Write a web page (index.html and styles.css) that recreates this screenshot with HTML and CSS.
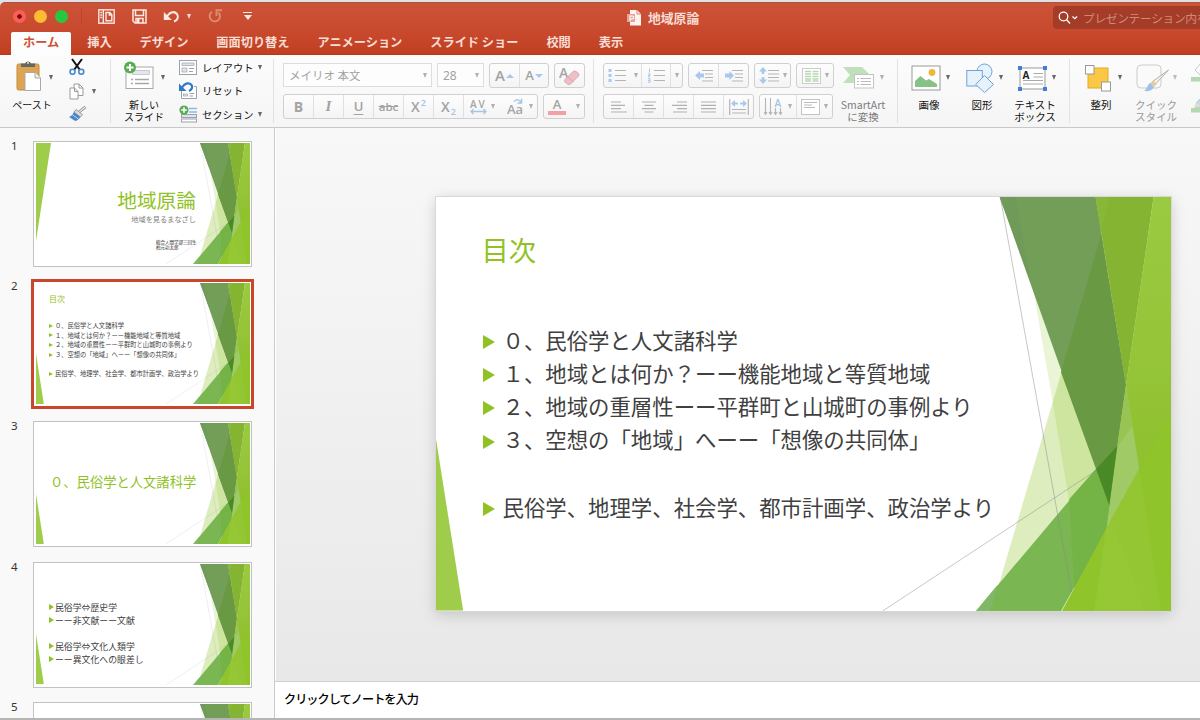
FILE: index.html
```html
<!DOCTYPE html>
<html lang="ja">
<head>
    <meta charset="UTF-8">
    <meta name="viewport" content="width=device-width, initial-scale=1.0">
    <title>地域原論</title>
    <link rel="stylesheet" href="styles.css">
</head>
<body>
    <!-- Shared slide artwork -->
    <svg class="defs" width="0" height="0">
        <symbol id="facet" viewBox="-1275 35 2205 1241" preserveAspectRatio="none">
            <polygon points="720,160 390,1276 930,1276 930,160" fill="#90c226" fill-opacity=".3"/>
            <polygon points="465,35 520,330 570,620 620,920 665,1276 930,1276 930,35" fill="#90c226" fill-opacity=".19"/>
            <polygon points="416,35 704,35 795,600 745,960" fill="#739e58"/>
            <polygon points="416,35 465,35 510,290" fill="#6f9a5a"/>
            <polygon points="720,150 795,600 745,960 600,560" fill="#6a9943"/>
            <polygon points="704,35 878,35 795,600" fill="#84b431"/>
            <polygon points="704,35 745,35 720,145" fill="#88b739"/>
            <polygon points="878,35 930,35 930,1276 700,1276 795,600" fill="url(#side)"/>
            <polygon points="795,600 835,850 745,1020 735,1030 769,780" fill="#a0ca66"/>
            <polygon points="795,600 813,722 769,785" fill="#97c452"/>
            <polygon points="345,1276 705,850 769,780 735,1035 600,1276" fill="#7ab651"/>
            <polygon points="345,1276 410,1197 388,1276" fill="#80b866"/>
            <polygon points="625,940 705,850 745,960 735,1035 640,1210" fill="#74b346"/>
            <polygon points="705,850 769,780 745,960" fill="#4a8a26"/>
            <path class="hairline" d="M418 35L632 1220M65 1276L705 855"/>
            <polygon points="603,1276 735,1030 835,850 930,690 930,1276" fill="#8fc42a"/>
            <polygon points="735,1030 752,1000 855,1276 700,1276" fill="#96c836"/>
            <polygon points="752,1000 835,850 900,1276 855,1276" fill="#93c632"/>
        </symbol>
        <linearGradient id="side" x1="0" y1="0" x2="0" y2="1">
            <stop offset="0" stop-color="#9aca40"/>
            <stop offset=".35" stop-color="#96c53a"/>
            <stop offset=".6" stop-color="#90c130"/>
        </linearGradient>
        <symbol id="wedge" viewBox="0 0 27 172" preserveAspectRatio="none">
            <polygon points="0,0 27,172 0,172" fill="#a0cc4b"/>
        </symbol>
    </svg>

    <div class="window">
        <header class="titlebar">
            <div class="quickbar">
                <span class="light red"></span>
                <span class="light yellow"></span>
                <span class="light green"></span>
                <span class="quick-sep"></span>
                <svg class="q-layout" width="17" height="15" viewBox="0 0 17 15" fill="none" stroke="#fbe9e4" stroke-width="1.4">
                    <rect x=".8" y=".8" width="15.4" height="13.4"/>
                    <path d="M5.3 1v13M2.3 3.5H4M2.3 6H4M2.3 8.5H4M8 3.5h3.8l2 2v6.3H8zM11.3 3.5V6h2.5"/>
                </svg>
                <svg class="q-save" width="15" height="15" viewBox="0 0 15 15" fill="none" stroke="#fbe9e4" stroke-width="1.5">
                    <path d="M1 1h13v13H3L1 12zM3.5 1v5.5h8V1M4 14v-4.500h7V14"/>
                    <path d="M5 10h2.500v4H5z" fill="#fbe9e4" stroke="none"/>
                </svg>
                <svg class="q-undo" width="17" height="13" viewBox="0 0 17 13" fill="none" stroke="#fbe9e4" stroke-width="2">
                    <path d="M3 8C6 2 11 .5 14 4c2 3 .5 6.500-3 7.500"/>
                    <path d="M.8 2v8h8z" fill="#fbe9e4" stroke="none"/>
                </svg>
                <i class="caret light-caret"></i>
                <svg class="q-redo" width="14" height="14" viewBox="0 0 14 14" fill="none" stroke="#dd8a76" stroke-width="1.900">
                    <path d="M4 2.800A5.200 5.200 0 1 0 10.500 3.500"/>
                    <path d="M8.500 7V1.200H14"/>
                </svg>
                <span class="q-more"><i class="caret"></i></span>
            </div>
            <div class="doc-title">
                <svg width="15" height="16" viewBox="0 0 15 16">
                    <path d="M3 0h7l4 4v11.500H3z" fill="#fdf3f0"/>
                    <path d="M10 0v4h4" fill="none" stroke="#d9836f"/>
                    <rect y="4" width="8" height="8" fill="#e8a493"/>
                    <path d="M3 11V6h2.200a1.500 1.500 0 0 1 0 3H3" fill="none" stroke="#fff" stroke-width="1.100"/>
                </svg>
                <span>地域原論</span>
            </div>
            <div class="search">
                <svg width="21" height="14" viewBox="0 0 21 14" fill="none" stroke="#fff" stroke-width="1.300">
                    <circle cx="5.500" cy="5.500" r="4.300"/>
                    <path d="M8.600 8.800L12 12.500M14.500 5.500l2.300 2.200 2.300-2.200"/>
                </svg>
                <span>プレゼンテーション内を検索</span>
            </div>
        </header>

        <nav class="tabs">
            <a class="tab active">ホーム</a>
            <a class="tab">挿入</a>
            <a class="tab">デザイン</a>
            <a class="tab">画面切り替え</a>
            <a class="tab">アニメーション</a>
            <a class="tab">スライド ショー</a>
            <a class="tab">校閲</a>
            <a class="tab">表示</a>
        </nav>

        <div class="ribbon">
            <!-- Clipboard -->
            <div class="group g-clip">
                <div class="big-btn">
                    <svg width="30" height="32" viewBox="0 0 30 32">
                        <rect x="1" y="4" width="22" height="26" rx="1.500" fill="#dda452" stroke="#c58b3e"/>
                        <path d="M5 7V3.500h4a3.200 3.200 0 0 1 6 0h4V7z" fill="#666"/>
                        <circle cx="12" cy="3" r="1" fill="#ddd"/>
                        <path d="M9 12.500h10l5.500 5.500v12.500H9z" fill="#fff" stroke="#a9a9a9"/>
                        <path d="M19 12.500V18h5.500" fill="#eee" stroke="#a9a9a9"/>
                    </svg>
                    <i class="caret"></i>
                    <span class="label">ペースト</span>
                </div>
                <div class="small-col">
                    <svg width="16" height="18" viewBox="0 0 16 18" fill="none">
                        <path d="M3 1l8 11M13 1L5 12" stroke="#111" stroke-width="2"/>
                        <circle cx="3.500" cy="13.800" r="2.500" stroke="#3f86d0" stroke-width="1.500"/>
                        <circle cx="12.300" cy="13.800" r="2.500" stroke="#3f86d0" stroke-width="1.500"/>
                    </svg>
                    <div class="inline">
                        <svg width="15" height="17" viewBox="0 0 15 17" fill="#fff" stroke="#9a9a9a">
                            <path d="M5 1h5l4 4v7.500H5zM10 1v4h4"/>
                            <path d="M1 5h4.500l3.500 3.500v7.500H1z"/>
                            <path d="M5.500 5v3.500H9" fill="none"/>
                        </svg>
                        <i class="caret"></i>
                    </div>
                    <svg width="18" height="16" viewBox="0 0 18 16">
                        <path d="M16.500.8L10 6" stroke="#888" stroke-width="2.800"/>
                        <path d="M16.500.8L10 6" stroke="#eee" stroke-width="1.200"/>
                        <path d="M7 3.500l6.500 5-2 2.500L5 6z" fill="#ddd" stroke="#888" stroke-width=".8"/>
                        <path d="M4.800 6l6.500 5c-1 2-3 3.500-5 4L0 11c2-.5 4-2.500 4.800-5z" fill="#4c86c6"/>
                        <path d="M3 8.500l6.500 4.500" stroke="#bcd6ef"/>
                    </svg>
                </div>
            </div>

            <!-- Slides -->
            <div class="group g-slides">
                <div class="big-btn">
                    <svg width="32" height="30" viewBox="0 0 32 30">
                        <rect x="3" y="6" width="27" height="21.500" fill="#fff" stroke="#a8a8a8"/>
                        <rect x="9.500" y="9.500" width="17" height="4" fill="#e3e6ec" stroke="#b5b9c0" stroke-width=".7"/>
                        <path d="M8 18.500h2m2 0h14M8 22.500h2m2 0h14" stroke="#a8a8a8" stroke-width="1.300"/>
                        <circle cx="7" cy="6.500" r="6" fill="#58ad53"/>
                        <path d="M7 3v7M3.500 6.500h7" stroke="#fff" stroke-width="2"/>
                    </svg>
                    <i class="caret"></i>
                    <span class="label">新しい<br>スライド</span>
                </div>
                <div class="small-col slide-cmds">
                    <div class="inline">
                        <svg width="18" height="15" viewBox="0 0 18 15" fill="#fff" stroke="#9da1a8">
                            <rect x=".5" y=".5" width="17" height="14"/>
                            <rect x="3" y="3" width="12" height="2.500" fill="#dfe3ec" stroke-width=".7"/>
                            <rect x="3" y="8" width="5" height="4" fill="#dfe3ec" stroke-width=".7"/>
                            <path d="M10 8.500h5M10 11.500h4"/>
                        </svg>
                        <span>レイアウト</span><i class="caret"></i>
                    </div>
                    <div class="inline">
                        <svg width="18" height="17" viewBox="0 0 18 17" fill="#fff" stroke="#9da1a8">
                            <path d="M2.500 9v7.500h15v-12H15"/>
                            <rect x="4.500" y="12" width="4" height="2" fill="#dfe3ec" stroke-width=".7"/>
                            <path d="M10.500 11.500H15M10.500 14H14"/>
                            <path d="M3 5.500C6 1 10 0 12.500 3c1.500 2.500 0 5-2.500 6" fill="none" stroke="#2f79c8" stroke-width="2.200"/>
                            <path d="M0 1.500V9h7.500z" fill="#2f79c8" stroke="none"/>
                        </svg>
                        <span>リセット</span>
                    </div>
                    <div class="inline">
                        <svg width="18" height="18" viewBox="0 0 18 18" fill="#dfe3ec" stroke="#9da1a8">
                            <path d="M10 3.500h8M10 7h8" stroke="#8fb8e6" stroke-width="1.400"/>
                            <rect x="2.500" y="9.500" width="15" height="3"/>
                            <rect x="2.500" y="14" width="15" height="3" fill="#fff"/>
                            <circle cx="5" cy="5" r="4.600" fill="#58ad53" stroke="none"/>
                            <path d="M5 2.200v5.600M2.200 5h5.600" stroke="#fff" stroke-width="1.600"/>
                        </svg>
                        <span>セクション</span><i class="caret"></i>
                    </div>
                </div>
            </div>

            <!-- Font -->
            <div class="group g-font dim">
                <div class="row">
                    <div class="combo combo-font">メイリオ 本文<i class="caret"></i></div>
                    <div class="combo combo-size">28<i class="caret"></i></div>
                    <div class="btns">
                        <b class="cell w30"><span class="glyph">A</span><i class="tri up"></i></b>
                        <b class="cell w28"><span class="glyph sm">A</span><i class="tri down"></i></b>
                    </div>
                    <div class="btns">
                        <b class="cell w29">
                            <svg width="22" height="21" viewBox="0 0 22 21">
                                <text x="0" y="13" class="svg-a">A</text>
                                <path d="M6 14.500L14 6.500q1.500-1 3 0l2.500 2q1 1.500 0 2.500l-8 8q-1.500 1-3 0L6 17q-1-1.500 0-2.500z" fill="#f0bfc6" stroke="#dba6ae"/>
                                <path d="M9 12l5.500 5" stroke="#dba6ae"/>
                            </svg>
                        </b>
                    </div>
                </div>
                <div class="row">
                    <div class="btns">
                        <b class="cell w30 strong">B</b>
                        <b class="cell w30 ital">I</b>
                        <b class="cell w30 under">U</b>
                        <b class="cell w30 strike">abc</b>
                        <b class="cell w30 sup">X<sup>2</sup></b>
                        <b class="cell w30 sup">X<sub>2</sub></b>
                        <b class="cell w38 plain">
                            <svg width="17" height="16" viewBox="0 0 17 16">
                                <text x="0" y="8.500" class="svg-av">AV</text>
                                <path d="M1 12.500h15M3.500 10L1 12.500 3.500 15M13.500 10l2.500 2.500-2.500 2.500" fill="none" stroke="#a5c4e8" stroke-width="1.300"/>
                            </svg><i class="caret"></i>
                        </b>
                        <b class="cell w35">
                            <svg width="18" height="18" viewBox="0 0 18 18">
                                <text x="0" y="15.500" class="svg-aa">Aa</text>
                                <path d="M7 3.500Q11 0 14 4M14.500.8V5h-4" fill="none" stroke="#a5c4e8" stroke-width="1.500"/>
                            </svg><i class="caret"></i>
                        </b>
                    </div>
                    <div class="btns">
                        <b class="cell w27 plain"><span class="fontcolor">A</span></b>
                        <b class="cell w13"><i class="caret"></i></b>
                    </div>
                </div>
            </div>

            <!-- Paragraph -->
            <div class="group g-para dim">
                <div class="rows">
                    <div class="row">
                        <div class="btns">
                            <b class="cell w27 plain">
                                <svg width="18" height="15" viewBox="0 0 18 15">
                                    <path d="M7 2.500h11M7 7.500h11M7 12.500h11" stroke="#b5b5b5" stroke-width="1.200"/>
                                    <path d="M.5 2.500h3M.5 7.500h3M.5 12.500h3" stroke="#a9c8ee" stroke-width="3"/>
                                </svg>
                            </b>
                            <b class="cell w11"><i class="caret"></i></b>
                            <b class="cell w29">
                                <svg width="18" height="15" viewBox="0 0 18 15">
                                    <path d="M7 2.500h11M7 7.500h11M7 12.500h11" stroke="#b5b5b5" stroke-width="1.200"/>
                                    <path d="M2.500.5v4M1 6h2v1.500H1.500V9H3M1 10.700h2v3.600H1M1 12.500h2" fill="none" stroke="#a9c8ee"/>
                                </svg>
                            </b>
                            <b class="cell w11"><i class="caret"></i></b>
                        </div>
                        <div class="btns">
                            <b class="cell w30">
                                <svg width="18" height="13" viewBox="0 0 18 13">
                                    <path d="M7 1.500h11M10 5h8M10 8.500h8M7 12h11" stroke="#b5b5b5" stroke-width="1.200"/>
                                    <path d="M0 6.500L5 2v2.500h4v4H5V11z" fill="#a9c8ee"/>
                                </svg>
                            </b>
                            <b class="cell w29">
                                <svg width="18" height="13" viewBox="0 0 18 13">
                                    <path d="M7 1.500h11M10 5h8M10 8.500h8M7 12h11" stroke="#b5b5b5" stroke-width="1.200"/>
                                    <path d="M9 6.500L4.500 2v2.500H0v4h4.500V11z" fill="#a9c8ee"/>
                                </svg>
                            </b>
                        </div>
                        <div class="btns">
                            <b class="cell w35">
                                <svg width="20" height="17" viewBox="0 0 20 17">
                                    <path d="M9 3.500h11M9 7h11M9 10.500h11M9 14h11" stroke="#b5b5b5" stroke-width="1.200"/>
                                    <path d="M4 0l4 4.500H5.300V7H2.700V4.500H0zM4 17l4-4.500H5.300V10H2.700v2.500H0z" fill="#a9c8ee"/>
                                </svg><i class="caret"></i>
                            </b>
                        </div>
                        <div class="btns">
                            <b class="cell w36">
                                <svg width="19" height="16" viewBox="0 0 19 16">
                                    <rect x=".5" y=".5" width="18" height="15" fill="#fff" stroke="#ccc"/>
                                    <path d="M3 3.500h6M3 6h6M3 8.500h6M3 11h6M3 13h6M10.500 3.500h6M10.500 6h6M10.500 8.500h6M10.500 11h6M10.500 13h6" stroke="#b5dab1" stroke-width="1.600"/>
                                </svg><i class="caret"></i>
                            </b>
                        </div>
                    </div>
                    <div class="row">
                        <div class="btns">
                            <b class="cell w30"><svg width="16" height="12" viewBox="0 0 16 12" stroke="#b0b0b0" stroke-width="1.200"><path d="M0 1h10M0 4.300h14M0 7.600h10M0 11h16"/></svg></b>
                            <b class="cell w30"><svg width="16" height="12" viewBox="0 0 16 12" stroke="#b0b0b0" stroke-width="1.200"><path d="M1 1h14M3.500 4.300h9M1 7.600h14M3.500 11h9"/></svg></b>
                            <b class="cell w30"><svg width="16" height="12" viewBox="0 0 16 12" stroke="#b0b0b0" stroke-width="1.200"><path d="M6 1h10M1 4.300h15M6 7.600h10M2 11h14"/></svg></b>
                            <b class="cell w30"><svg width="16" height="12" viewBox="0 0 16 12" stroke="#b0b0b0" stroke-width="1.200"><path d="M0 1h15M0 4.300h15M0 7.600h15M0 11h15"/></svg></b>
                            <b class="cell w29">
                                <svg width="20" height="16" viewBox="0 0 20 16">
                                    <path d="M.7 0v16M19.300 0v16M3 10.500h14M3 14h14" stroke="#b5b5b5" stroke-width="1.200"/>
                                    <path d="M2 4.500L6 1v2.500h3v2H6V8zM18 4.500L14 1v2.500h-3v2h3V8z" fill="#a9c8ee"/>
                                </svg>
                            </b>
                        </div>
                        <div class="btns">
                            <b class="cell w37">
                                <svg width="20" height="17" viewBox="0 0 20 17">
                                    <path d="M1.500 0v16M6.500 0v16M11.500 10v6M16.500 10v6M0 14l1.500 2.500L3 14M5 14l1.500 2.500L8 14M10 14l1.500 2.500L13 14M15 14l1.500 2.500L18 14" fill="none" stroke="#b5b5b5" stroke-width="1.100"/>
                                    <text x="10.500" y="8.500" class="svg-blue">A</text>
                                </svg><i class="caret"></i>
                            </b>
                            <b class="cell w35">
                                <svg width="19" height="16" viewBox="0 0 19 16">
                                    <rect x=".5" y=".5" width="18" height="15" fill="#fff" stroke="#c4c4c4"/>
                                    <path d="M3 3.500h13M3 6h8M3 8.500h11" stroke="#bbb"/>
                                </svg><i class="caret"></i>
                            </b>
                        </div>
                    </div>
                </div>
                <div class="big-btn smartart">
                    <svg width="32" height="28" viewBox="0 0 32 28">
                        <path d="M0 3h19l8 8-8 8H0l7-8z" fill="#bfe0bb"/>
                        <rect x="11.500" y="10.500" width="19" height="13.500" fill="#fff" stroke="#c4c4c4"/>
                        <path d="M14 14.500h2m1.500 0H28M14 17.500h2m1.500 0H28M14 20.500h2m1.500 0H28" stroke="#bbb"/>
                    </svg>
                    <i class="caret"></i>
                    <span class="label">SmartArt<br>に変換</span>
                </div>
            </div>

            <!-- Insert -->
            <div class="group g-insert">
                <div class="big-btn">
                    <svg class="nudge" width="32" height="28" viewBox="0 0 32 28">
                        <rect x="1" y="2" width="28" height="24" fill="#fff" stroke="#999"/>
                        <path d="M4 23v-6l5.500-5 5.500 4.500 3-1.500 8 5V23z" fill="#86c283"/>
                        <circle cx="21" cy="8.500" r="3.400" fill="#eeb53f"/>
                    </svg>
                    <i class="caret"></i>
                    <span class="label">画像</span>
                </div>
                <div class="big-btn">
                    <svg width="32" height="30" viewBox="0 0 32 30" fill="#e6f2fc" stroke="#6ea3d8">
                        <circle cx="18.500" cy="8.500" r="7.500"/>
                        <rect x=".8" y="7.500" width="15.500" height="15.500"/>
                        <path d="M18.500 12.500l9 9-9 8-8.800-8z"/>
                    </svg>
                    <i class="caret"></i>
                    <span class="label">図形</span>
                </div>
                <div class="big-btn">
                    <svg class="nudge" width="32" height="28" viewBox="0 0 32 28">
                        <rect x="3" y="4" width="25" height="21" fill="#fff" stroke="#999"/>
                        <path d="M16.500 9.500H26M16.500 13H26M6 16.500h20M6 20h20" stroke="#aaa"/>
                        <text x="5.500" y="14.500" class="svg-box">A</text>
                        <path d="M1 4h4M26 4h4M1 25h4M26 25h4" stroke="#3f7fd6" stroke-width="4"/>
                    </svg>
                    <i class="caret"></i>
                    <span class="label">テキスト<br>ボックス</span>
                </div>
            </div>

            <!-- Arrange -->
            <div class="group g-arrange">
                <div class="big-btn">
                    <svg class="nudge" width="32" height="28" viewBox="0 0 32 28">
                        <rect x="5" y="4" width="20" height="20" fill="#fac845" stroke="#e0ab2a"/>
                        <rect x="2.500" y="1.500" width="8.500" height="8.500" fill="#fff" stroke="#999"/>
                        <rect x="18.500" y="18" width="9" height="9" fill="#fff" stroke="#999"/>
                    </svg>
                    <i class="caret"></i>
                    <span class="label">整列</span>
                </div>
                <div class="big-btn faded">
                    <svg class="nudge" width="36" height="29" viewBox="0 0 36 29">
                        <rect x="1" y="2" width="24" height="23" rx="4" fill="#fafafa" stroke="#ccc"/>
                        <path d="M32.500 7L19 21.500l-3-2.500z" fill="#f4f0ec" stroke="#b5b0a8"/>
                        <path d="M17 17.500l4 3.500-3 3-4-3.500z" fill="#e8c9a0"/>
                        <path d="M14 20l4 4c-2 4-6 4.500-10 4 3-1.500 3-6 6-8z" fill="#9dc2e8"/>
                    </svg>
                    <i class="caret"></i>
                    <span class="label">クイック<br>スタイル</span>
                </div>
                <div class="clipped">
                    <svg width="20" height="20" viewBox="0 0 20 20">
                        <path d="M4 8l6-7 8 7-7 7z" fill="#fafafa" stroke="#c0c4cc"/>
                        <rect x="0" y="15" width="20" height="4.500" fill="#add6aa"/>
                    </svg>
                    <svg width="20" height="20" viewBox="0 0 20 20">
                        <path d="M4 14l2-6 8-8 4 4-9 9z" fill="#bcd6f2" stroke="#a8c2de"/>
                        <path d="M4 14l2-5 3 3z" fill="#f3ddb0"/>
                        <rect x="0" y="14" width="20" height="4.500" fill="#add6aa"/>
                    </svg>
                </div>
            </div>
        </div>

        <div class="workspace">
            <aside class="sidebar">
                <div class="thumb-row">
                    <span class="num">1</span>
                    <div class="thumb">
                        <div class="slide t-title">
                            <svg class="art"><use href="#facet"/></svg>
                            <svg class="wedge-top" viewBox="0 0 15 98"><polygon points="0,0 15,0 0,98" fill="#a0cc4b"/></svg>
                            <h3>地域原論</h3>
                            <p class="sub">地域を見るまなざし</p>
                            <p class="by">総合人間学部三回生<br>柏元功太郎</p>
                        </div>
                    </div>
                </div>
                <div class="thumb-row">
                    <span class="num">2</span>
                    <div class="thumb selected">
                        <div class="slide t-toc">
                            <svg class="art"><use href="#facet"/></svg>
                            <svg class="wedge"><use href="#wedge"/></svg>
                            <h3>目次</h3>
                            <ul>
                                <li>０、民俗学と人文諸科学</li>
                                <li>１、地域とは何か？ーー機能地域と等質地域</li>
                                <li>２、地域の重層性ーー平群町と山城町の事例より</li>
                                <li>３、空想の「地域」へーー「想像の共同体」</li>
                                <li class="gap">民俗学、地理学、社会学、都市計画学、政治学より</li>
                            </ul>
                        </div>
                    </div>
                </div>
                <div class="thumb-row">
                    <span class="num">3</span>
                    <div class="thumb">
                        <div class="slide t-section">
                            <svg class="art"><use href="#facet"/></svg>
                            <svg class="wedge"><use href="#wedge"/></svg>
                            <h3>０、民俗学と人文諸科学</h3>
                        </div>
                    </div>
                </div>
                <div class="thumb-row">
                    <span class="num">4</span>
                    <div class="thumb">
                        <div class="slide t-body">
                            <svg class="art"><use href="#facet"/></svg>
                            <svg class="wedge"><use href="#wedge"/></svg>
                            <ul>
                                <li>民俗学⇔歴史学</li>
                                <li>ーー非文献ーー文献</li>
                                <li class="gap">民俗学⇔文化人類学</li>
                                <li>ーー異文化への眼差し</li>
                            </ul>
                        </div>
                    </div>
                </div>
                <div class="thumb-row">
                    <span class="num">5</span>
                    <div class="thumb">
                        <div class="slide">
                            <svg class="art"><use href="#facet"/></svg>
                        </div>
                    </div>
                </div>
            </aside>

            <main class="editor">
                <div class="canvas">
                    <div class="slide main-slide">
                        <svg class="art"><use href="#facet"/></svg>
                        <svg class="wedge"><use href="#wedge"/></svg>
                        <h1>目次</h1>
                        <ul>
                            <li>０、民俗学と人文諸科学</li>
                            <li>１、地域とは何か？ーー機能地域と等質地域</li>
                            <li>２、地域の重層性ーー平群町と山城町の事例より</li>
                            <li>３、空想の「地域」へーー「想像の共同体」</li>
                            <li class="gap">民俗学、地理学、社会学、都市計画学、政治学より</li>
                        </ul>
                    </div>
                </div>
                <div class="notes">クリックしてノートを入力</div>
            </main>
        </div>
    </div>
</body>
</html>
```

FILE: styles.css
```css
* {
    box-sizing: border-box;
}

body {
    margin: 0;
    font-family: "Noto Sans CJK JP", sans-serif;
    color: #222;
    background: #e1e0e4;
    overflow: hidden;
}

h1, h3, p, ul {
    margin: 0;
    padding: 0;
    font-weight: 400;
}

ul {
    list-style: none;
}

svg {
    display: block;
    flex: none;
}

.defs {
    position: absolute;
}

.window {
    display: flex;
    flex-direction: column;
    width: 1200px;
    height: 720px;
    padding-top: 2px;
    border-bottom: 2px solid #b5b5b5;
}

/* Title bar */
.titlebar {
    display: flex;
    align-items: center;
    height: 30px;
    background: linear-gradient(#cc5338, #c8492d);
    border-top: 1px solid #a9523f;
    border-radius: 5px 0 0 0;
}

.quickbar {
    display: flex;
    flex: none;
    align-items: center;
    width: 600px;
    padding-left: 13px;
    padding-bottom: 3px;
}

.light {
    width: 13px;
    height: 13px;
    margin-right: 8px;
    border-radius: 50%;
}

.red {
    background: radial-gradient(circle, #7c0d0b 0 2px, #fb5e5a 2.5px);
}

.yellow {
    background: #fdbb32;
}

.green {
    background: #27c83f;
}

.quick-sep {
    width: 1px;
    height: 16px;
    margin-left: 5px;
    background: #bd452c;
}

.q-layout {
    margin-left: 16px;
}

.q-save {
    margin-left: 17px;
}

.q-undo {
    margin-left: 16px;
}

.caret {
    display: block;
    flex: none;
    width: 0;
    height: 0;
    border: 2.5px solid transparent;
    border-top: 5px solid #666;
    border-bottom: 0;
}

.light-caret {
    margin-left: 7px;
    border-top-color: #f6dcd5;
}

.q-redo {
    margin-left: 17px;
}

.q-more {
    display: flex;
    flex-direction: column;
    align-items: center;
    width: 9px;
    margin-left: 21px;
    padding-top: 2px;
    border-top: 1px solid #fbe9e4;
}

.q-more .caret {
    border-width: 5px 4px 0;
    border-top-color: #fbe9e4;
}

.doc-title {
    display: flex;
    flex: none;
    align-items: center;
    gap: 6px;
    width: 453px;
    padding-left: 27px;
    font-size: 12.8px;
    font-weight: 700;
    line-height: 20px;
    color: #f8ddd5;
}

.search {
    display: flex;
    flex: none;
    align-items: center;
    gap: 4px;
    width: 147px;
    height: 23px;
    padding-left: 5px;
    border-radius: 4px 0 0 4px;
    background: #a43c27;
    color: #d0897a;
    font-size: 11.8px;
    letter-spacing: -.4px;
    white-space: nowrap;
    overflow: hidden;
}

/* Tabs */
.tabs {
    display: flex;
    gap: 28px;
    height: 23px;
    padding-left: 11px;
    background: linear-gradient(#c8492d, #c13f21);
    border-bottom: 1px solid #ae3a20;
    font-size: 12.2px;
    font-weight: 700;
    line-height: 21px;
    color: #f8ddd5;
}

.tab {
    white-space: nowrap;
}

.tab.active {
    height: 23px;
    margin-right: -12px;
    padding: 0 12px;
    border-radius: 2px 2px 0 0;
    background: #fdfdfd;
    color: #cc4f36;
}

/* Ribbon */
.ribbon {
    display: flex;
    height: 73px;
    background: linear-gradient(#fcfcfc, #f5f5f5);
    border-bottom: 1px solid #c8c8c8;
    overflow: hidden;
}

.group {
    display: flex;
    flex: none;
    margin: 4px 0;
    padding-top: 3px;
    border-right: 1px solid #e2e2e2;
}

.g-clip {
    width: 111px;
    padding-left: 16px;
}

.g-slides {
    width: 163px;
    padding-left: 17px;
}

.g-font {
    flex-direction: column;
    width: 320px;
    padding: 4px 0 0 9px;
}

.g-para {
    width: 304px;
    padding: 4px 0 0 9px;
}

.g-insert {
    width: 172px;
    padding-left: 15px;
    gap: 15px;
}

.g-arrange {
    width: 130px;
    padding-left: 15px;
    border: 0;
    gap: 17px;
}

.big-btn {
    display: grid;
    grid-template-columns: 32px 6px;
    grid-template-rows: 31px auto;
    align-content: start;
    align-items: center;
    justify-items: center;
    row-gap: 6px;
    height: 60px;
}

.label {
    font-size: 10.5px;
    line-height: 12px;
    text-align: center;
    white-space: nowrap;
    color: #111;
}

.g-clip .label,
.g-slides .label {
    font-size: 10px;
}

.g-clip .big-btn svg {
    margin: -3px 3px 0 0;
}

.g-slides .big-btn svg {
    margin: -3px 10px 0 0;
}

.nudge {
    margin-right: 5px;
}

.faded .label {
    color: #999;
}

.faded .caret {
    border-top-color: #bbb;
}

.small-col {
    display: flex;
    flex-direction: column;
    align-items: flex-start;
    justify-content: space-between;
    height: 64px;
    margin: -4px 0 0 15px;
}

.inline {
    display: flex;
    align-items: center;
    height: 18px;
    gap: 5px;
    font-size: 10.3px;
    color: #111;
}

.g-clip .small-col .inline {
    gap: 8px;
}

.slide-cmds {
    margin-left: 13px;
    height: 65px;
}

/* Disabled controls */
.dim {
    color: #a3a3a3;
}

.dim .caret {
    border-top-color: #b0b0b0;
}

.dim .label {
    color: #7d7d7d;
}

.row {
    display: flex;
    gap: 5px;
    height: 24px;
    margin-bottom: 7px;
}

.combo {
    display: flex;
    align-items: center;
    justify-content: space-between;
    height: 24px;
    padding: 0 4px 0 5px;
    border: 1px solid #ddd;
    background: #fdfdfd;
    font-size: 11.5px;
}

.combo-font {
    width: 149px;
}

.combo-size {
    width: 47px;
    font-family: "Noto Sans", sans-serif;
    font-size: 12px;
}

.btns {
    display: flex;
    height: 25px;
    border: 1px solid #d0d0d0;
    border-radius: 3px;
    background: linear-gradient(#fdfdfd, #f4f4f4);
}

.cell {
    display: flex;
    align-items: center;
    justify-content: center;
    gap: 4px;
    border-right: 1px solid #e0e0e0;
    font-family: "Open Sans", sans-serif;
    font-size: 13px;
    font-weight: 400;
    line-height: 1;
}

.cell:last-child {
    border-right: 0;
}

.cell.plain {
    border-right-color: transparent;
}

.w11 { width: 11px; }
.w13 { width: 13px; }
.w27 { width: 27px; }
.w28 { width: 28px; }
.w29 { width: 29px; }
.w30 { width: 30px; }
.w35 { width: 35px; }
.w36 { width: 36px; }
.w37 { width: 37px; }
.w38 { width: 38px; }

.glyph {
    font-size: 15px;
    font-weight: 600;
    color: #a3a3a3;
}

.glyph.sm {
    font-size: 13px;
}

.glyph + .tri {
    margin-left: -3px;
}

.tri {
    border: 4px solid transparent;
}

.tri.up {
    border-top: 0;
    border-bottom-color: #a9c8ee;
}

.tri.down {
    border-bottom: 0;
    border-top-color: #a9c8ee;
}

.strong {
    font-size: 14px;
    font-weight: 700;
}

.ital {
    font-family: "Liberation Serif", serif;
    font-size: 15px;
    font-weight: 700;
    font-style: italic;
}

.under {
    font-weight: 600;
    text-decoration: underline;
    text-underline-offset: 3px;
}

.strike {
    font-size: 11.5px;
    font-weight: 600;
    text-decoration: line-through;
}

.sup {
    gap: 1px;
    font-size: 14px;
    font-weight: 600;
}

.sup sup,
.sup sub {
    font-size: 9px;
    line-height: 1;
    color: #a3c2e6;
}

.sup sup {
    margin-top: -8px;
}

.sup sub {
    margin-bottom: -9px;
}

.fontcolor {
    width: 18px;
    height: 17px;
    border-bottom: 4px solid #f2a0a4;
    font-size: 13px;
    font-weight: 600;
    line-height: 12px;
    text-align: center;
}

.svg-a,
.svg-aa,
.svg-av,
.svg-blue,
.svg-box {
    font-family: "Open Sans", sans-serif;
    font-size: 14px;
    font-weight: 600;
    fill: #a5a5a5;
}

.svg-aa {
    font-size: 13px;
}

.svg-av {
    font-size: 10px;
    letter-spacing: 2px;
}

.svg-blue {
    font-size: 10px;
    fill: #a3c2e6;
}

.svg-box {
    font-size: 10px;
    font-weight: 700;
    fill: #222;
}

.smartart {
    margin: -1px 0 0 13px;
}

.smartart svg {
    margin-right: 8px;
}

.clipped {
    display: flex;
    flex-direction: column;
    gap: 12px;
    width: 10px;
    margin-left: -4px;
    opacity: .9;
}

/* Workspace */
.workspace {
    display: flex;
    flex: 1;
    min-height: 0;
}

.sidebar {
    display: flex;
    flex-direction: column;
    gap: 14.4px;
    width: 275px;
    padding-top: 12.5px;
    border-right: 1px solid #cbcbcb;
    background: #f9f9f9;
    overflow: hidden;
}

.thumb-row {
    display: flex;
    flex: none;
    height: 126px;
}

.num {
    width: 33px;
    padding-left: 11px;
    font-family: "Noto Sans", sans-serif;
    font-size: 11.5px;
    line-height: 10px;
    color: #333;
}

.thumb {
    width: 219px;
    height: 126px;
    padding: 1px 1px 2px 2px;
    border: 1px solid #c2c2c2;
    background: #fff;
}

.thumb.selected {
    border-color: #f3c9b9;
    outline: 3px solid #c9462a;
    outline-offset: -1px;
}

.slide {
    position: relative;
    background: #fff;
}

.thumb .slide {
    height: 121px;
    white-space: nowrap;
}

.art {
    position: absolute;
    inset: 0;
    width: 100%;
    height: 100%;
}

.hairline {
    fill: none;
    stroke: #8a8a90;
    stroke-opacity: .6;
    stroke-width: 2.4;
}

.thumb .art {
    --hair: 6;
}

.wedge {
    position: absolute;
    left: 0;
    bottom: 0;
    width: 3.7%;
    height: 41.5%;
}

.wedge-top {
    position: absolute;
    left: 0;
    top: 0;
    width: 15px;
    height: 98px;
}

.slide h1,
.slide h3 {
    color: #90c226;
}

.slide li {
    display: flex;
    align-items: center;
    color: #404040;
}

.slide li::before {
    content: "";
    border: solid transparent;
    border-left-color: #90c226;
    border-right: 0;
}

.t-title {
    padding: 42px 54px 0 0;
    text-align: right;
}

.t-title h3 {
    font-size: 19.7px;
    line-height: 30px;
}

.t-title .sub {
    font-size: 7.2px;
    line-height: 9px;
    color: #808080;
}

.t-title .by {
    width: 41px;
    margin: 16px -1px 0 auto;
    font-size: 4.5px;
    line-height: 5px;
    text-align: left;
    color: #222;
}

.t-toc {
    padding: 10px 0 0 13px;
}

.t-toc h3 {
    font-size: 8px;
    line-height: 12px;
}

.t-toc ul {
    padding-top: 16px;
}

.t-toc li {
    font-size: 6.27px;
    line-height: 9.7px;
}

.t-toc li::before {
    margin-right: 2px;
    border-width: 2px 0 2px 4px;
}

.t-toc .gap {
    margin-top: 9.7px;
}

.t-section {
    padding: 48px 0 0 14px;
}

.t-section h3 {
    font-size: 13.3px;
    line-height: 22px;
}

.t-body {
    padding: 37px 0 0 13px;
}

.t-body li {
    font-size: 8.9px;
    line-height: 13px;
}

.t-body li::before {
    margin-right: 1px;
    border-width: 3px 0 3px 5px;
}

.t-body .gap {
    margin-top: 13px;
}

/* Editor */
.editor {
    display: flex;
    flex: 1;
    flex-direction: column;
}

.canvas {
    flex: 1;
    padding: 68.5px 0 0 159.5px;
    background: linear-gradient(#f8f8f8, #e8e8e8);
    border-left: 1px solid #fff;
}

.main-slide {
    width: 735px;
    height: 414px;
    padding: 31px 0 0 47px;
    box-shadow: 0 0 0 1px #d8d8d8, 0 3px 14px rgba(0, 0, 0, .18);
}

.main-slide h1 {
    font-size: 27.3px;
    line-height: 42px;
    text-indent: -1px;
}

.main-slide ul {
    padding-top: 53px;
}

.main-slide li {
    font-size: 21.4px;
    line-height: 33.3px;
    white-space: nowrap;
}

.main-slide li::before {
    margin: 5px 8px 0 0;
    border-width: 7px 0 7px 12px;
}

.main-slide .gap {
    margin-top: 34px;
}

.notes {
    height: 37px;
    padding-left: 9px;
    border-top: 1px solid #cfcfcf;
    background: #fff;
    font-size: 12.2px;
    font-weight: 500;
    line-height: 34px;
    letter-spacing: -1px;
    color: #000;
}
```
